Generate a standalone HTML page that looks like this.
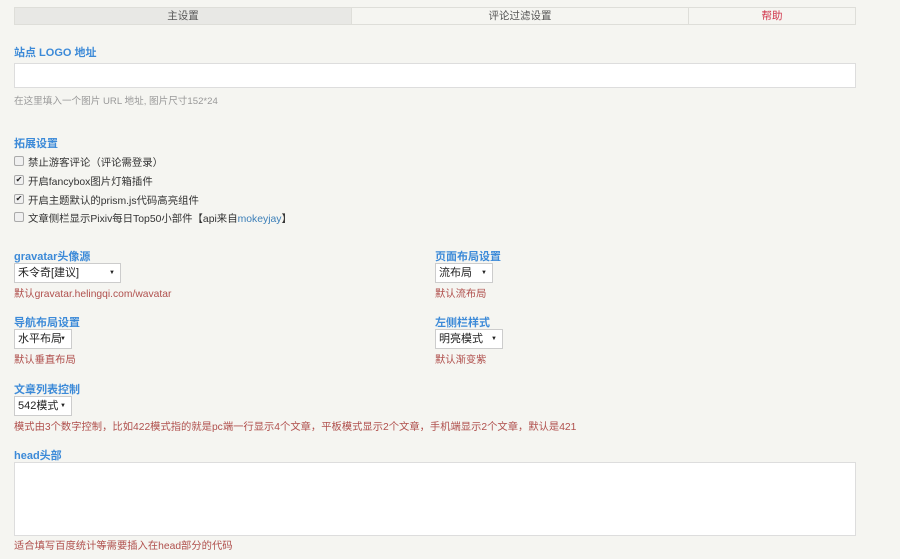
<!DOCTYPE html>
<html><head><meta charset="utf-8"><style>
body{margin:0;width:900px;height:559px;background:#f5f5f1;font-family:"Liberation Sans","Noto Sans CJK SC",sans-serif;position:relative;overflow:hidden}
.a{position:absolute;white-space:nowrap}
.tab{position:absolute;top:7px;height:18px;border:1px solid #deded9;box-sizing:border-box;font-size:10.5px;line-height:16px;text-align:center;color:#555;background:#f5f5f1}
.lb{color:#3c8ad8;font-weight:bold;font-size:11px}
.hint{color:#999;font-size:9.6px}
.red{color:#b0504d;font-size:10.3px}
.box{position:absolute;background:#fff;border:1px solid #ddd;box-sizing:border-box}
.sel{position:absolute;background:#fff;border:1px solid #ccc;box-sizing:border-box;font-size:11px;line-height:18px;padding-left:3px;color:#222}
.sel:after{content:"▼";position:absolute;right:5px;top:0;font-size:6px}
.cb{position:absolute;left:14px;width:8px;height:8px;border:1px solid #aaa;border-radius:2px;background:#f0f0f0;font-size:8px;line-height:8px;text-align:center;color:#222}
.ct{position:absolute;left:28px;font-size:10.4px;color:#333}
</style></head><body>
<div class="tab" style="left:14px;width:338px;background:#e8e8e5">主设置</div>
<div class="tab" style="left:351px;width:338px">评论过滤设置</div>
<div class="tab" style="left:688px;width:168px;color:#d0334a">帮助</div>

<div class="a lb" style="left:14px;top:44px">站点 LOGO 地址</div>
<div class="box" style="left:14px;top:63px;width:842px;height:25px"></div>
<div class="a hint" style="left:14px;top:93px">在这里填入一个图片 URL 地址, 图片尺寸152*24</div>

<div class="a lb" style="left:14px;top:135px">拓展设置</div>
<div class="cb" style="top:156px"></div><div class="a ct" style="top:154px">禁止游客评论（评论需登录）</div>
<div class="cb" style="top:175px">✔</div><div class="a ct" style="top:173px">开启fancybox图片灯箱插件</div>
<div class="cb" style="top:194px">✔</div><div class="a ct" style="top:192px">开启主题默认的prism.js代码高亮组件</div>
<div class="cb" style="top:212px"></div><div class="a ct" style="top:210px">文章侧栏显示Pixiv每日Top50小部件【api来自<span style="color:#3c7fb8">mokeyjay</span>】</div>

<div class="a lb" style="left:14px;top:248px">gravatar头像源</div>
<div class="sel" style="left:14px;top:263px;width:107px;height:20px">禾令奇[建议]</div>
<div class="a red" style="left:14px;top:285px">默认gravatar.helingqi.com/wavatar</div>

<div class="a lb" style="left:435px;top:248px">页面布局设置</div>
<div class="sel" style="left:435px;top:263px;width:58px;height:20px">流布局</div>
<div class="a red" style="left:435px;top:285px">默认流布局</div>

<div class="a lb" style="left:14px;top:314px">导航布局设置</div>
<div class="sel" style="left:14px;top:329px;width:58px;height:20px">水平布局</div>
<div class="a red" style="left:14px;top:351px">默认垂直布局</div>

<div class="a lb" style="left:435px;top:314px">左侧栏样式</div>
<div class="sel" style="left:435px;top:329px;width:68px;height:20px">明亮模式</div>
<div class="a red" style="left:435px;top:351px">默认渐变紫</div>

<div class="a lb" style="left:14px;top:381px">文章列表控制</div>
<div class="sel" style="left:14px;top:396px;width:58px;height:20px">542模式</div>
<div class="a red" style="left:14px;top:418px">模式由3个数字控制，比如422模式指的就是pc端一行显示4个文章，平板模式显示2个文章，手机端显示2个文章，默认是421</div>

<div class="a lb" style="left:14px;top:447px">head头部</div>
<div class="box" style="left:14px;top:462px;width:842px;height:74px"></div>
<div class="a red" style="left:14px;top:537px">适合填写百度统计等需要插入在head部分的代码</div>
</body></html>
